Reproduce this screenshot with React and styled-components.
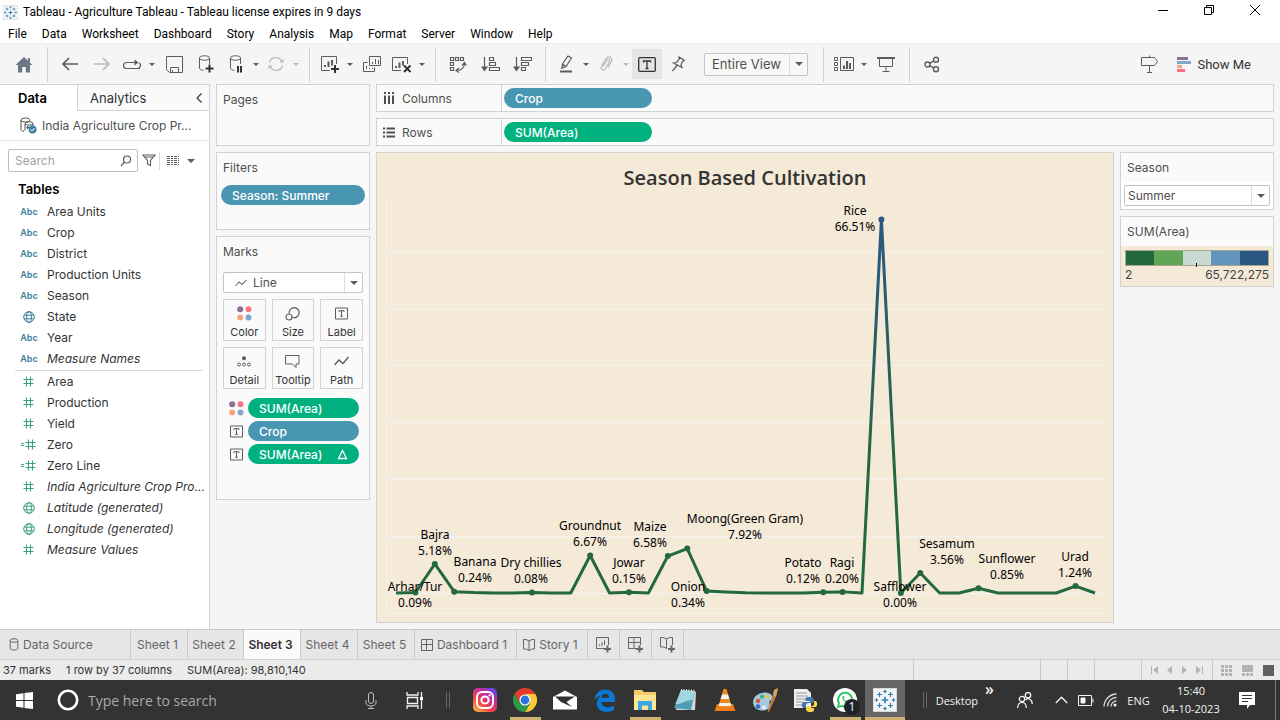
import React from "react";
import styled, { createGlobalStyle, css } from "styled-components";

const ui = `Inter, "Noto Sans", sans-serif`;
const system = `"Open Sans", "Noto Sans", sans-serif`;
const windowFont = `Roboto, "Open Sans", sans-serif`;
const chartFont = `"Noto Sans", "Open Sans", sans-serif`;

const c = {
  line: "#d2d2d2",
  canvas: "#f5f5f5",
  card: "#fafafa",
  text: "#333333",
  soft: "#4f4f4f",
  icon: "#5c5c5c",
  dim: "#b8b8b8",
  blue: "#4996b2",
  green: "#00b180",
  sand: "#f5e9d8",
};

const GlobalStyle = createGlobalStyle`
  *, *::before, *::after { box-sizing: border-box; }
  body { margin: 0; background: ${c.canvas}; font-family: ${ui}; font-size: 12px; color: ${c.text}; }
  button, input, select { font: inherit; color: inherit; margin: 0; }
  button { background: none; border: 0; padding: 0; }
  h1, h2, h3, ul { margin: 0; padding: 0; font-size: inherit; font-weight: inherit; }
  ul { list-style: none; }
  svg { display: block; flex: none; }
`;

const Page = styled.div`
  display: flex;
  flex-direction: column;
  min-height: 100vh;
`;

/* ---------- window chrome ---------- */

const TitleBar = styled.header`
  display: flex;
  align-items: center;
  height: 24px;
  padding-left: 3px;
  gap: 5px;
  background: #fff;
  color: #000;
  font-family: ${windowFont};
`;

const WindowButtons = styled.div`
  display: flex;
  align-self: flex-start;
  margin: 0 2px 0 auto;
`;

const WindowButton = styled.button`
  display: grid;
  place-items: center;
  width: 46px;
  height: 20px;
`;

const MenuBar = styled.nav`
  display: flex;
  align-items: center;
  height: 19px;
  padding-left: 8px;
  gap: 15px;
  background: #fff;
  color: #000;
  font-family: ${windowFont};
`;

/* ---------- toolbar ---------- */

const Toolbar = styled.div`
  display: flex;
  align-items: center;
  height: 41px;
  padding: 0 8px;
  border-top: 1px solid #ececec;
  color: ${c.icon};
`;

const ToolButton = styled.button`
  display: grid;
  place-items: center;
  width: ${(p) => p.$w || 32}px;
  height: 30px;
  color: ${(p) => (p.$active ? "#333" : p.$dim ? c.dim : c.icon)};
  background: ${(p) => (p.$active ? "#e5e5e5" : "none")};
`;

const Separator = styled.span`
  width: 1px;
  height: 35px;
  margin: 0 6px 0 7px;
  background: ${c.line};
`;

const ShowMe = styled.button`
  display: flex;
  align-items: center;
  gap: 6px;
  margin: 0 21px 0 12px;
  font-family: Roboto, ${ui};
  font-size: 13px;
  color: ${c.text};
`;

const Spacer = styled.span`
  flex: 1;
`;

/* ---------- drop-down ---------- */

const SelectBox = styled.span`
  display: grid;
  grid-template-columns: 1fr 18px;
  height: ${(p) => p.$h || 21}px;
  width: ${(p) => (p.$w ? `${p.$w}px` : "auto")};
  margin: ${(p) => p.$margin || 0};
  border: 1px solid #c4c4c4;
  border-radius: 2px;
  background: ${(p) => p.$bg || "#fff"};
`;

const SelectInput = styled.select`
  grid-area: 1 / 1 / 2 / 3;
  min-width: 0;
  width: 100%;
  appearance: none;
  border: 0;
  outline: 0;
  background: none;
  padding: 0 18px 0 ${(p) => p.$indent || 3}px;
  font-size: ${(p) => p.$size || 12}px;
  color: ${c.soft};
`;

const SelectArrow = styled.span`
  grid-area: 1 / 2;
  display: grid;
  place-items: center;
  border-left: 1px solid #dcdcdc;
  pointer-events: none;
  color: ${c.icon};
`;

const SelectLead = styled.span`
  grid-area: 1 / 1;
  display: flex;
  align-items: center;
  padding-left: 11px;
  pointer-events: none;
  color: #777;
`;

/* ---------- workspace ---------- */

const Workspace = styled.div`
  display: flex;
  flex: 1;
  align-items: stretch;
`;

const DataPane = styled.aside`
  width: 210px;
  flex: none;
  background: #fff;
  border-top: 1px solid ${c.line};
  border-right: 1px solid ${c.line};
`;

const PaneTabs = styled.div`
  display: flex;
  height: 26px;
`;

const PaneTab = styled.button`
  width: 77px;
  padding-right: 12px;
  font-size: 13px;
  font-weight: 600;
  color: #000;
`;

const OtherTabs = styled.div`
  display: flex;
  flex: 1;
  align-items: center;
  justify-content: space-between;
  padding: 0 7px 0 12px;
  background: ${c.card};
  border-left: 1px solid ${c.line};
  border-bottom: 1px solid ${c.line};
  font-size: 13px;
`;

const Source = styled.div`
  display: flex;
  align-items: center;
  gap: 5px;
  height: 30px;
  padding-left: 20px;
  border-bottom: 1px solid #e2e2e2;
  white-space: nowrap;
  color: ${c.soft};
`;

const SearchRow = styled.div`
  display: flex;
  align-items: center;
  padding: 8px 12px 6px 8px;
  color: ${c.icon};
`;

const SearchBox = styled.label`
  display: flex;
  align-items: center;
  width: 130px;
  height: 23px;
  padding: 0 5px 0 6px;
  border: 1px solid #bdbdbd;
  border-radius: 2px;
`;

const SearchInput = styled.input`
  flex: 1;
  min-width: 0;
  border: 0;
  outline: 0;
  padding: 0;
  background: none;
  &::placeholder { color: #a2a2a2; opacity: 1; }
`;

const IconButton = styled.button`
  display: grid;
  place-items: center;
  width: ${(p) => p.$w || 22}px;
  height: 20px;
  color: ${c.icon};
`;

const ThinRule = styled.span`
  width: 1px;
  height: 18px;
  background: #d8d8d8;
`;

const TablesHeading = styled.h2`
  padding-left: 18px;
  line-height: 22px;
  font-size: 13px;
  font-weight: 600;
  color: #000;
`;

const FieldList = styled.ul`
  margin: 0 6px 0 15px;
  padding: 1px 0;
  & + & {
    padding: 0;
    border-top: 1px solid #d8d8d8;
  }
`;

const Field = styled.li`
  display: grid;
  grid-template-columns: 28px 1fr;
  align-items: center;
  height: 21px;
  column-gap: 4px;
  white-space: nowrap;
  font-style: ${(p) => (p.$italic ? "italic" : "normal")};
`;

const FieldIcon = styled.span`
  display: grid;
  place-items: center;
  font-size: 9px;
  font-style: normal;
  font-weight: 600;
  color: ${(p) => (p.$measure ? "#3ba37c" : "#3c7f9b")};
`;

const Shelves = styled.div`
  display: flex;
  flex-direction: column;
  gap: 6px;
  width: 154px;
  flex: none;
  margin-left: 6px;
`;

const Card = styled.section`
  min-height: ${(p) => p.$min || 0}px;
  border: 1px solid ${c.line};
  background: ${c.card};
`;

const CardTitle = styled.h2`
  padding: 0 6px;
  line-height: 29px;
  color: ${c.soft};
`;

const Pill = styled.button`
  display: flex;
  align-items: center;
  justify-content: space-between;
  width: ${(p) => (p.$w ? `${p.$w}px` : "auto")};
  height: 20px;
  flex: ${(p) => (p.$w ? "none" : 1)};
  padding: 0 11px;
  border-radius: 10px;
  background: ${(p) => (p.$measure ? c.green : c.blue)};
  color: #fff;
  font-weight: 500;
`;

const FilterRow = styled.div`
  display: flex;
  padding: 3px 4px;
`;

const MarksBody = styled.div`
  display: flex;
  flex-direction: column;
  gap: 6px;
  padding: 6px;
`;

const MarkGrid = styled.div`
  display: grid;
  grid-template-columns: repeat(3, 1fr);
  gap: 6px;
`;

const MarkButton = styled.button`
  display: flex;
  flex-direction: column;
  align-items: center;
  justify-content: space-between;
  height: 42px;
  padding: 4px 0 1px;
  border: 1px solid ${c.line};
  background: ${c.card};
  font-size: 11px;
  line-height: 14px;
  color: ${c.text};
`;

const MarkIcon = styled.span`
  display: grid;
  place-items: center;
  height: 18px;
  color: ${c.icon};
`;

const MarkPills = styled.div`
  display: flex;
  flex-direction: column;
  gap: 3px;
  padding: 3px 4px;
`;

const MarkPillRow = styled.div`
  display: flex;
  align-items: center;
  color: ${c.icon};
`;

const PillIcon = styled.span`
  display: grid;
  place-items: center;
  width: 21px;
  padding-right: 2px;
`;

const View = styled.main`
  display: flex;
  flex-direction: column;
  flex: 1;
  min-width: 0;
  gap: 6px;
  padding: 0 6px 6px;
`;

const Shelf = styled.div`
  display: flex;
  align-items: stretch;
  height: 28px;
  border: 1px solid ${c.line};
  background: ${c.card};
`;

const ShelfName = styled.h2`
  display: flex;
  align-items: center;
  gap: 7px;
  width: 125px;
  padding-left: 6px;
  border-right: 1px solid ${c.line};
  color: ${c.soft};
`;

const ShelfDrop = styled.div`
  display: flex;
  align-items: center;
  padding-left: 2px;
`;

const ViewRow = styled.div`
  display: flex;
  align-items: flex-start;
  gap: 6px;
`;

const ChartCard = styled.section`
  flex: 1;
  min-width: 0;
  border: 1px solid ${c.line};
  background: ${c.sand};
`;

const ChartTitle = styled.h1`
  height: 46px;
  padding-top: 2px;
  line-height: 46px;
  text-align: center;
  font-family: ${system};
  font-size: 20px;
  font-weight: 600;
  color: #333;
`;

const ChartSvg = styled.svg`
  width: 100%;
  height: auto;
  font-family: ${chartFont};
  font-size: 12px;
  text-anchor: middle;
  fill: #000;
`;

const Legends = styled.div`
  display: flex;
  flex-direction: column;
  gap: 6px;
  width: 154px;
  flex: none;
`;

const FilterControl = styled.div`
  padding: 3px;
  background: #fff;
`;

const Legend = styled.div`
  padding: 4px 4px 2px;
  background: ${c.sand};
`;

const Ramp = styled.div`
  display: grid;
  grid-template-columns: repeat(5, 1fr);
  height: 16px;
  border: 1px solid #a9a58f;
`;

const Swatch = styled.span`
  display: flex;
  justify-content: center;
  align-items: flex-end;
  background: ${(p) => p.$color};
`;

const Tick = styled.i`
  width: 1px;
  height: 4px;
  margin-bottom: -2px;
  background: #000;
`;

const RampLabels = styled.div`
  display: flex;
  justify-content: space-between;
  line-height: 18px;
  font-size: 12px;
  color: #444;
`;

/* ---------- sheet tabs and status bar ---------- */

const SheetTabs = styled.div`
  display: flex;
  height: 30px;
  border-top: 1px solid #c9c9c9;
  background: #e6e6e6;
`;

const SheetTab = styled.button`
  display: flex;
  align-items: center;
  gap: 4px;
  justify-content: ${(p) => (p.$start ? "flex-start" : "center")};
  width: ${(p) => p.$w}px;
  padding: ${(p) => (p.$start ? "0 0 0 9px" : p.$w > 32 ? "0 3px 0 0" : "0")};
  border-right: 1px solid #c9c9c9;
  color: #666;
  ${(p) =>
    p.$active &&
    css`
      background: ${c.card};
      color: ${c.text};
      font-weight: 600;
    `}
`;

const StatusBar = styled.footer`
  display: flex;
  align-items: center;
  gap: 15px;
  height: 21px;
  padding-left: 3px;
  border-top: 1px solid #d2d2d2;
  background: #ebebeb;
  font-size: 11px;
`;

const StatusCells = styled.div`
  display: flex;
  align-self: stretch;
  margin-left: auto;
`;

const StatusCell = styled.span`
  display: flex;
  align-items: center;
  justify-content: ${(p) => (p.$views ? "space-between" : "space-evenly")};
  padding: ${(p) => (p.$views ? "0 6px 0 8px" : 0)};
  width: ${(p) => p.$w}px;
  border-left: 1px solid #c9c9c9;
  color: #b3b3b3;
`;

/* ---------- taskbar ---------- */

const Taskbar = styled.div`
  display: flex;
  align-items: stretch;
  height: 40px;
  background: #333;
  color: #f2f2f2;
  font-family: ${system};
  font-size: 11px;
`;

const TaskButton = styled.button`
  display: grid;
  place-items: center;
  width: ${(p) => p.$w}px;
`;

const TaskSearch = styled.label`
  display: flex;
  align-items: center;
  gap: 9px;
  width: 336px;
  padding: 0 7px 0 9px;
`;

const TaskInput = styled.input`
  flex: 1;
  min-width: 0;
  border: 0;
  outline: 0;
  padding: 0;
  background: none;
  font-size: 14px;
  &::placeholder { color: #a9a9a9; opacity: 1; }
`;

const Grip = styled.span`
  align-self: center;
  width: 4px;
  height: 16px;
  margin: ${(p) => p.$margin};
  border: solid #666;
  border-width: 0 1px;
`;

const TaskApp = styled.button`
  display: grid;
  grid-template-rows: 1fr 3px;
  place-items: center;
  width: 40px;
  border-top: 3px solid transparent;
  background: ${(p) => (p.$active ? "#666" : "none")};
  &::after {
    content: "";
    width: ${(p) => (p.$active ? 40 : 31)}px;
    height: 3px;
    background: ${(p) => (p.$open ? "#cdb271" : "transparent")};
  }
`;

const BadgeHost = styled.span`
  position: relative;
`;

const Badge = styled.span`
  position: absolute;
  right: -3px;
  bottom: -3px;
  width: 16px;
  height: 16px;
  border-radius: 50%;
  background: #20232a;
  color: #fff;
  font-size: 12px;
  line-height: 16px;
  text-align: center;
`;

const Tray = styled.div`
  display: flex;
  align-items: center;
  margin-left: auto;
  padding-right: 4px;
`;

const DesktopButton = styled.button`
  display: flex;
  align-items: center;
  gap: 7px;
  height: 40px;
  margin-right: 9px;
`;

const Chevrons = styled.span`
  align-self: flex-start;
  font-size: 16px;
  font-weight: 600;
  line-height: 18px;
`;

const Clock = styled.button`
  width: 74px;
  line-height: 18px;
`;

const ShowDesktop = styled.span`
  width: 1px;
  height: 40px;
  margin-left: 9px;
  background: #7a7a7a;
`;

/* ---------- icons ---------- */

const Icon = ({ w = 16, h = 16, sw = 1, children, ...rest }) => (
  <svg width={w} height={h} viewBox={`0 0 ${w} ${h}`} fill="none" stroke="currentColor" strokeWidth={sw} aria-hidden="true" {...rest}>
    {children}
  </svg>
);

const Caret = ({ w = 8 }) => (
  <svg width={w} height={w / 2} viewBox="0 0 8 4" aria-hidden="true">
    <path d="M0 0h8l-4 4z" fill="currentColor" />
  </svg>
);

const plusAt = (x, y, r) => `M${x - r} ${y}h${2 * r}M${x} ${y - r}v${2 * r}`;

const TableauMark = ({ size = 16, bg = "#fff" }) => (
  <svg width={size} height={size} viewBox="0 0 24 24" aria-hidden="true">
    <path d="M0 0h24v24H0z" fill={bg} stroke="#bbb" />
    <g stroke="#2f7fb5" strokeWidth="1.2">
      <path d={plusAt(12, 12, 3.2)} strokeWidth="1.6" />
      <path d={plusAt(12, 3.500, 1.8) + plusAt(12, 20.500, 1.8) + plusAt(3.500, 12, 1.8) + plusAt(20.500, 12, 1.8)} />
      <path d={plusAt(6.500, 6.500, 2.5) + plusAt(17.500, 6.500, 2.5) + plusAt(6.500, 17.500, 2.5) + plusAt(17.500, 17.500, 2.5)} />
    </g>
  </svg>
);

const I = {
  home: (
    <Icon w={18} h={17}>
      <path d="M9 1l8.500 8H15v7.500h-4.200V11H7.200v5.500H3V9H.5z" fill="#6b7785" stroke="none" />
      <path d="M13 2h2v4h-2z" fill="#6b7785" stroke="none" />
    </Icon>
  ),
  back: <Icon w={18} h={14} sw={1.7}><path d="M17 7H2M8 1L2 7l6 6" /></Icon>,
  forward: <Icon w={18} h={14} sw={1.7}><path d="M1 7h15M10 1l6 6-6 6" /></Icon>,
  loop: (
    <Icon w={20} h={11} sw={1.2}>
      <path d="M5.500 3.500H4.500a3 3 0 0 0 0 6h11a3 3 0 0 0 1.500-5.600M5 3.500h9" />
      <path d="M12.500 .5l4 3-4 3z" fill="currentColor" stroke="none" />
    </Icon>
  ),
  save: <Icon w={17} h={17}><path d="M.5 .5h16v16H3.500l-3-3zM4.500 16v-4.500h8V16M6.500 14v2" /></Icon>,
  dbAdd: (
    <Icon w={16} h={18}>
      <ellipse cx="6.500" cy="3" rx="5" ry="2.200" />
      <path d="M1.500 3v10c0 1.200 1 2 4 2.300M11.500 3v6" />
      <path d="M7.500 13.500h8M11.500 9.500v8" stroke="#333" strokeWidth="2" />
    </Icon>
  ),
  dbPause: (
    <Icon w={14} h={18}>
      <ellipse cx="6.500" cy="3" rx="5" ry="2.200" />
      <path d="M1.500 3v10c0 1.200 1 2 4 2.300M11.500 3v6" />
      <path d="M9 11v6.500M12 11v6.500" stroke="#333" strokeWidth="2" />
    </Icon>
  ),
  refresh: (
    <Icon w={18} h={16} sw={1.2}>
      <path d="M2.500 6.500a6.500 6.500 0 0 1 12-1.500M15.500 9.500a6.500 6.500 0 0 1-12 1.500" />
      <path d="M16.500 3v3.500h-4zM1.500 13V9.500h4z" fill="currentColor" stroke="none" />
    </Icon>
  ),
  newSheet: (
    <Icon w={20} h={18}>
      <path d="M10 15.500H1.500v-14h15V9" />
      <path d="M5 12v-2M8.500 12V6.500M12 10.500V5" strokeWidth="2" />
      <path d="M11 14h8M15 10v8" stroke="#333" strokeWidth="2" />
    </Icon>
  ),
  duplicate: (
    <Icon w={18} h={17}>
      <path d="M6.500 .5h11v9h-11zM4.500 6.500h-4v9h11v-4" />
      <path d="M9.500 8V6M12.500 8V3M15.500 8V4M3.500 13v-3M6.500 13v-1M9.500 13v-1" />
    </Icon>
  ),
  clear: (
    <Icon w={20} h={17}>
      <path d="M9 14.500H.5v-13h15V8" />
      <path d="M4 12v-2M7.500 12V6.500M11 9.500V5" strokeWidth="2" />
      <path d="M12 9.500l6.500 6.500M18.500 9.500L12 16" stroke="#333" strokeWidth="2" />
    </Icon>
  ),
  swap: (
    <Icon w={18} h={17} sw={1.2}>
      <path d="M1.500 1.500h3v3h-3zM6.500 1.500h3v3h-3zM11.500 1.500h3v3h-3zM1.500 6.500h3v3h-3zM1.500 11.500h3v3h-3z" />
      <path d="M15.500 7c0 5-3 7.500-8 7.500M13 9.500l2.500-3 2 3M10 12l-3 2.500 3 2" />
    </Icon>
  ),
  sortAsc: (
    <Icon w={19} h={16} sw={1.2}>
      <path d="M3.500 1v13M1 11l2.500 3.500L6 11z" fill="currentColor" />
      <path d="M8.500 1.500h4v3h-4zM8.500 6.500h6v3h-6zM8.500 11.500h10v3h-10z" />
    </Icon>
  ),
  sortDesc: (
    <Icon w={19} h={16} sw={1.2}>
      <path d="M3.500 1v13M1 11l2.500 3.500L6 11z" fill="currentColor" />
      <path d="M8.500 1.500h10v3h-10zM8.500 6.500h7v3h-7zM8.500 11.500h4v3h-4z" />
    </Icon>
  ),
  highlighter: (
    <Icon w={14} h={18} sw={1.2}>
      <path d="M3 13l.5-4L9 1l3.500 2L7 11.500zM3.500 9L7 11.500M2 13.500L3.500 12" />
      <path d="M1 16.500h12" strokeWidth="2" />
    </Icon>
  ),
  clip: (
    <Icon w={13} h={16} sw={1.2}>
      <path d="M3 10.500L7 4c1-1.500 3.500-.5 2.500 1.500L5.500 12.500c-1.500 3-5.500 1-4-2L6 2.500C8-.5 13 1 11.500 5L8 11.500" />
    </Icon>
  ),
  label: (
    <Icon w={18} h={15} sw={1.3}>
      <rect x=".7" y=".7" width="16.600" height="13.600" rx="1" />
      <path d="M5.500 5.500v-1.500h7v1.500M9 4v7.500M7.500 11.500h3" />
    </Icon>
  ),
  pin: (
    <Icon w={14} h={16} sw={1.2}>
      <path d="M8 1l5.500 3.500-2 .7-1.500 3.800 1 2.500-8.500-4.500L5.500 6.500 8 3.500zM6 9.500L1.500 15" />
    </Icon>
  ),
  cards: (
    <Icon w={20} h={15}>
      <path d="M.5 .5h3v3h-3zM.5 5.500h3v3h-3zM.5 10.500h3v3h-3zM6.500 .5h13v13h-13z" />
      <path d="M10 12V8.500M13 12V4M16 12V6" strokeWidth="2" />
    </Icon>
  ),
  present: (
    <Icon w={18} h={16}>
      <path d="M0 2h18" strokeWidth="2" />
      <path d="M2.500 2v8.500h13V2M9 10v5M5.500 15.500h7" />
    </Icon>
  ),
  share: (
    <Icon w={16} h={17} sw={1.4}>
      <circle cx="3.500" cy="8.500" r="2.500" /><circle cx="12" cy="3.700" r="2.500" /><circle cx="12" cy="13.300" r="2.500" />
      <path d="M5.700 7.300l4-2.400M5.700 9.700l4 2.400" />
    </Icon>
  ),
  signpost: <Icon w={19} h={18}><path d="M1.500 2.500h13l3 4-3 4h-13zM9.500 .5v2M9.500 10.500v7M7 17.500h5" strokeLinejoin="round" /></Icon>,
  showMe: (
    <svg width="14" height="15" viewBox="0 0 14 15" aria-hidden="true">
      <path d="M0 0h11v3H0z" fill="#8a6f96" /><path d="M0 4h14v3H0z" fill="#85a5cc" />
      <path d="M0 8h5v3H0z" fill="#f3a57d" /><path d="M0 12h8v3H0z" fill="#fa6f80" />
    </svg>
  ),
  source: (
    <Icon w={17} h={17}>
      <ellipse cx="5.500" cy="3" rx="4.500" ry="2" /><path d="M1 3v9.500c0 1 1 1.500 3 1.800" />
      <path d="M5 6.500c2-2.500 8-2 8 0v3M5 6.500v7M5 7c1 1.500 7 1.500 8 0M6.500 10.500h2.500M7.500 9v3" />
      <circle cx="12.500" cy="12.500" r="4" fill="#3f80a0" stroke="none" />
      <path d="M10.500 12.500l1.500 1.500 2.500-3" stroke="#fff" />
    </Icon>
  ),
  search: <Icon w={12} h={12} sw={1.2}><circle cx="7" cy="4.500" r="3.500" /><path d="M4.500 7L1 11" /></Icon>,
  funnel: <Icon w={14} h={13} sw={1.1}><path d="M1 1h12L8.500 6.500v5L5.500 10V6.500zM2.500 3h9" /></Icon>,
  list: <Icon w={12} h={10}><path d="M0 .5h12M0 2.500h12M0 4.500h12M0 6.500h12M0 8.500h12" strokeDasharray="3 1 2 1" /></Icon>,
  globe: (
    <Icon w={12} h={12} sw={1}>
      <circle cx="6" cy="6" r="5.300" /><ellipse cx="6" cy="6" rx="2.400" ry="5.300" /><path d="M1.200 4.200h9.600M1.200 7.800h9.600" />
    </Icon>
  ),
  hash: <Icon w={12} h={11} sw={1.1}><path d="M3.500 .5v10M7.500 .5v10M.5 3.500h10M.5 7.500h10" /></Icon>,
  calc: <Icon w={18} h={11} sw={1.1}><path d="M8.500 .5v10M12.500 .5v10M5.500 3.500h10M5.500 7.500h10M1 4.500h3M1 6.500h3" /></Icon>,
  cols: (
    <Icon w={12} h={12} sw={2}><path d="M2 0v2M6 0v2M10 0v2M2 3.500V12M6 3.500V12M10 3.500V12" /></Icon>
  ),
  rows: (
    <Icon w={12} h={11} sw={2}><path d="M0 1.500h2M0 5.500h2M0 9.500h2M3.500 1.500H12M3.500 5.500H12M3.500 9.500H12" /></Icon>
  ),
  dots: (
    <svg width="15" height="15" viewBox="0 0 15 15" aria-hidden="true">
      <circle cx="3.200" cy="3.200" r="3" fill="#8a6f96" /><circle cx="11.500" cy="3.200" r="3" fill="#fa7585" />
      <circle cx="3.200" cy="11.500" r="3" fill="#f3a57d" /><circle cx="11.500" cy="11.500" r="3" fill="#85a5cc" />
    </svg>
  ),
  size: <Icon w={15} h={15} sw={1.2}><path d="M4.200 7.500a5 5 0 1 1 3 3.800" /><circle cx="4" cy="11" r="3" /></Icon>,
  text: (
    <Icon w={13} h={13}><path d="M.5 1h12v11H.5zM4 5V3.700h5V5M6.500 3.700v5.600M5.200 9.300h2.600" /></Icon>
  ),
  detail: (
    <Icon w={14} h={11}>
      <circle cx="7" cy="2.200" r="2" fill="currentColor" stroke="none" />
      <circle cx="2" cy="8.500" r="1.500" /><circle cx="7" cy="8.500" r="1.500" /><circle cx="12" cy="8.500" r="1.500" />
    </Icon>
  ),
  tooltip: <Icon w={15} h={13}><path d="M.5 .5h13.500v8.500h-3v3.500L7.500 9h-7z" /></Icon>,
  path: <Icon w={15} h={10} sw={1.4}><path d="M.5 9l4.500-5 4 3.500L14.500 1" /></Icon>,
  line: <Icon w={12} h={8} sw={1.1}><path d="M.5 7L4 3l3 2.500L11.500 1" /></Icon>,
  cylinder: <Icon w={10} h={13}><ellipse cx="5" cy="2.500" rx="3.800" ry="1.800" /><path d="M1.200 2.500v8c0 2 7.600 2 7.600 0v-8" /></Icon>,
  dashboard: <Icon w={12} h={12}><path d="M.5 .5h11v11H.5zM.5 5.500h11M5.500 .5v11" /></Icon>,
  story: <Icon w={12} h={12}><path d="M.5 .5h2.500l3 1.500 3-1.500h2.500v9.500H9l-3 1.500L3 10H.5zM6 2v9.500" /></Icon>,
  addSheet: (
    <Icon w={16} h={16}><path d="M8 11.500H.5v-11h12V8M3.500 9V7.500M6 9V5M8.500 8V3.500" /><path d="M8 12h7M11.500 8.500v7" strokeWidth="2" /></Icon>
  ),
  addDashboard: (
    <Icon w={16} h={16}><path d="M8 11.500H.5v-11h12V8M.5 5.500h12M6 .5v11" /><path d="M8 12h7M11.500 8.500v7" strokeWidth="2" /></Icon>
  ),
  addStory: (
    <Icon w={16} h={16}><path d="M7 11.500L3.500 10H.5V.5h3L6.500 2l3-1.500h3V8M6.500 2v9" /><path d="M8 12h7M11.500 8.500v7" strokeWidth="2" /></Icon>
  ),
};

const TaskIcons = {
  instagram: (
    <svg width="24" height="24" viewBox="0 0 24 24" fill="none">
      <defs>
        <linearGradient id="ig" x1="0" y1="1" x2=".8" y2="0">
          <stop offset="0" stopColor="#fdc64b" /><stop offset=".4" stopColor="#f6433f" />
          <stop offset=".7" stopColor="#c52f9c" /><stop offset="1" stopColor="#6a46e0" />
        </linearGradient>
      </defs>
      <rect width="24" height="24" rx="5" fill="url(#ig)" />
      <rect x="4" y="4" width="16" height="16" rx="5" stroke="#fff" strokeWidth="2" />
      <circle cx="12" cy="12" r="3.600" stroke="#fff" strokeWidth="2" /><circle cx="16.600" cy="7.400" r="1.100" fill="#fff" />
    </svg>
  ),
  chrome: (
    <svg width="24" height="24" viewBox="0 0 24 24">
      <path d="M12 6h10.400A12 12 0 0 1 12 24l5.200-9z" fill="#fcc934" />
      <path d="M6.800 15L1.600 6a12 12 0 0 1 20.800 0H12z" fill="#e33b2e" />
      <path d="M6.800 15L1.600 6A12 12 0 0 0 12 24l5.200-9z" fill="#2b9a4b" />
      <circle cx="12" cy="12" r="5.600" fill="#fff" /><circle cx="12" cy="12" r="4.400" fill="#2a73e0" />
    </svg>
  ),
  mail: (
    <svg width="24" height="20" viewBox="0 0 24 20">
      <path d="M0 7l12-6.500L24 7v12.500H0z" fill="#fff" /><path d="M2 6.500h20L13.500 12l5.500 5L8 12z" fill="#333" />
    </svg>
  ),
  edge: (
    <svg width="22" height="23" viewBox="0 0 22 23">
      <path d="M.5 11C1 4.500 5.500.5 11.300.5 17.500.5 21 5 21 10.500V13H7.300c.2 3.500 3 5.300 6.400 5.300 2.300 0 4.500-.7 6.300-1.800v4.600c-2 1.200-4.600 1.900-7.500 1.900C6.500 23 2.800 19.300 2.800 14.500c0-3.700 2-6.700 5.200-8.300C4.800 6.800 2.200 8.600.5 11zm6.900-2.200h7.800c0-2.200-1.200-4-3.700-4-2.300 0-3.800 1.800-4.100 4z" fill="#0a78d7" />
    </svg>
  ),
  explorer: (
    <svg width="24" height="22" viewBox="0 0 24 22">
      <path d="M1 1h8l2 2h12v18H1z" fill="#f3cf6b" /><path d="M1 6h22v15H1z" fill="#fde593" />
      <path d="M5 12h14v9h-4v-4.500H9V21H5z" fill="#36a9e6" />
    </svg>
  ),
  notes: (
    <svg width="24" height="24" viewBox="0 0 24 24">
      <path d="M8 3l15 1-1 18-19 0z" fill="#d5dadd" /><path d="M8 2l14 1-4 19-17-2z" fill="#4d9fb4" />
      <path d="M8 2l14 1-2.500 9C12 12 8 17 2.500 16z" fill="#9fd6df" />
      <path d="M8.500 1v2.500M11 1v2.500M13.500 1.200v2.500M16 1.500v2.500M18.500 1.500v2.500M21 1.800v2.500" stroke="#ddd" />
    </svg>
  ),
  vlc: (
    <svg width="22" height="24" viewBox="0 0 22 24">
      <path d="M3 16h16l2.500 7H.5z" fill="#ef7d1a" /><path d="M9.500 1h3l5 17c-2 2-11 2-13 0z" fill="#f28a1f" />
      <path d="M8 6.500h6l1.300 4.500H6.700zM5.500 15h11l.8 3h-12.500z" fill="#f4f4f4" />
    </svg>
  ),
  paint: (
    <svg width="26" height="25" viewBox="0 0 26 25">
      <path d="M2 18C-2 9 8 3 16 5c5 1.500 6 5 3 7s-1 4-1 6c0 4-12 8-16 0z" fill="#a5cbe3" />
      <circle cx="6" cy="13" r="2.200" fill="#e04f3f" /><circle cx="10" cy="8.800" r="2" fill="#4caf50" /><circle cx="15.500" cy="8.500" r="2" fill="#f3c343" />
      <circle cx="6" cy="18.500" r="2.200" fill="#3a66c4" /><circle cx="12" cy="19.500" r="2" fill="#eee" />
      <path d="M21 7l3 1.500L17 24l-1.500-1z" fill="#c47a3a" /><path d="M21 7l1-5 4-2-1 5-1 4z" fill="#dba56a" />
    </svg>
  ),
  python: (
    <svg width="24" height="24" viewBox="0 0 24 24">
      <path d="M1 1h13l4 4v15H1z" fill="#eee" /><path d="M3 5h11M3 8h12M3 11h12M3 14h8M3 17h7" stroke="#999" />
      <path d="M16 9c-4 0-3.500 2-3.500 4H17v1h-6c-3 0-3 6 0 6h2v-3c0-1 1-2 2-2h4c1 0 2-1 2-2 0-2 0-4-5-4z" fill="#3f77ab" />
      <path d="M17.500 24c4 0 3.500-2 3.500-4h-4.500v-1H22c3 0 3-6 0-6h-1v3c0 1-1 2-2 2h-4c-1 0-2 1-2 2 0 2 0 4 4.500 4z" fill="#fbd247" />
    </svg>
  ),
  whatsapp: (
    <svg width="24" height="24" viewBox="0 0 24 24">
      <circle cx="12" cy="12" r="12" fill="#fff" />
      <path d="M5 19l1-3.800a7 7 0 1 1 2.800 2.700z" fill="none" stroke="#28c45a" strokeWidth="1.800" />
      <path d="M9.500 8.500c-1.500 2 3 7 5.500 6l1-1.500-2-1-1 1c-1-.3-2-1.500-2.300-2.200l.8-1-.8-1.800z" fill="#28c45a" />
    </svg>
  ),
};

/* ---------- data ---------- */

const menus = ["File", "Data", "Worksheet", "Dashboard", "Story", "Analysis", "Map", "Format", "Server", "Window", "Help"];

const dimensions = [
  { name: "Area Units" }, { name: "Crop" }, { name: "District" }, { name: "Production Units" }, { name: "Season" },
  { name: "State", icon: "globe" }, { name: "Year" }, { name: "Measure Names", italic: true },
];

const measures = [
  { name: "Area", icon: "hash" }, { name: "Production", icon: "hash" }, { name: "Yield", icon: "hash" },
  { name: "Zero", icon: "calc" }, { name: "Zero Line", icon: "calc" },
  { name: "India Agriculture Crop Pro...", icon: "hash", italic: true },
  { name: "Latitude (generated)", icon: "globe", italic: true },
  { name: "Longitude (generated)", icon: "globe", italic: true },
  { name: "Measure Values", icon: "hash", italic: true },
];

const markCount = 37;

/* at: index of the mark; lx, ly: where the label's first line is centred */
const crops = [
  { at: 1, name: "Arhar/Tur", pct: 0.09, lx: 38, ly: 392 },
  { at: 2, name: "Bajra", pct: 5.18, lx: 58, ly: 340 },
  { at: 3, name: "Banana", pct: 0.24, lx: 98, ly: 367 },
  { at: 7, name: "Dry chillies", pct: 0.08, lx: 154, ly: 368 },
  { at: 10, name: "Groundnut", pct: 6.67, lx: 213, ly: 331 },
  { at: 12, name: "Jowar", pct: 0.15, lx: 252, ly: 368 },
  { at: 14, name: "Maize", pct: 6.58, lx: 273, ly: 332 },
  { at: 15, name: "Moong(Green Gram)", pct: 7.92, lx: 368, ly: 324 },
  { at: 16, name: "Onion", pct: 0.34, lx: 311, ly: 392 },
  { at: 22, name: "Potato", pct: 0.12, lx: 426, ly: 368 },
  { at: 23, name: "Ragi", pct: 0.2, lx: 465, ly: 368 },
  { at: 25, name: "Rice", pct: 66.51, lx: 478, ly: 16 },
  { at: 26, name: "Safflower", pct: 0, lx: 523, ly: 392 },
  { at: 27, name: "Sesamum", pct: 3.56, lx: 570, ly: 349 },
  { at: 30, name: "Sunflower", pct: 0.85, lx: 630, ly: 364 },
  { at: 35, name: "Urad", pct: 1.24, lx: 698, ly: 362 },
];

const unlabelled = { 4: 0.08, 17: 0.18, 18: 0.05 };

const baseY = 394;
const markX = (i) => 19 + (i * 699) / (markCount - 1);
const markY = (pct) => baseY - pct * 5.615;

const Chart = () => {
  const values = Array.from({ length: markCount }, (_, i) => {
    const crop = crops.find((d) => d.at === i);
    return crop ? crop.pct : unlabelled[i] || 0;
  });
  const points = values.map((v, i) => `${markX(i)},${markY(v)}`).join(" ");
  return (
    <ChartSvg viewBox="0 0 736 423" role="img" aria-label="Share of cultivated area by crop">
      <defs>
        <linearGradient id="area" gradientUnits="userSpaceOnUse" x1="0" y1={baseY} x2="0" y2="20">
          <stop offset="0" stopColor="#24693d" /><stop offset=".3" stopColor="#24693d" />
          <stop offset="1" stopColor="#2a5783" />
        </linearGradient>
      </defs>
      <g stroke="#f2f2f2" strokeWidth="1">
        {[53, 110, 166, 223, 280, 337, 394].map((y) => (
          <path key={y} d={`M9 ${y + 0.5}H727`} />
        ))}
        <path d="M9.500 1V414.500H727" fill="none" />
      </g>
      <polyline points={points} fill="none" stroke="url(#area)" strokeWidth="3" strokeLinejoin="round" />
      {crops.map((d) => (
        <g key={d.name}>
          <circle cx={markX(d.at)} cy={markY(d.pct)} r="3" fill={d.pct > 50 ? "#2a5783" : "#24693d"} />
          <text x={d.lx} y={d.ly}>{d.name}</text>
          <text x={d.lx} y={d.ly + 16}>{d.pct.toFixed(2)}%</text>
        </g>
      ))}
    </ChartSvg>
  );
};

const Fields = ({ items, measure }) => (
  <FieldList>
    {items.map((f) => (
      <Field key={f.name} $italic={f.italic}>
        <FieldIcon $measure={measure}>{f.icon ? I[f.icon] : "Abc"}</FieldIcon>
        <span>{f.name}</span>
      </Field>
    ))}
  </FieldList>
);

const Select = ({ label, value, lead, size, indent, ...box }) => (
  <SelectBox {...box}>
    {lead && <SelectLead>{lead}</SelectLead>}
    <SelectInput aria-label={label} defaultValue={value} $size={size} $indent={indent}>
      <option>{value}</option>
    </SelectInput>
    <SelectArrow><Caret /></SelectArrow>
  </SelectBox>
);

const Tool = ({ name, icon, caret, w, dim, active }) => (
  <>
    <ToolButton aria-label={name} $w={w || (caret ? 28 : 32)} $dim={dim} $active={active}>{icon}</ToolButton>
    {caret && <ToolButton aria-label={`${name} options`} $w={12} $dim={dim}><Caret w={6} /></ToolButton>}
  </>
);

export default function App() {
  return (
    <Page>
      <GlobalStyle />
      <TitleBar>
        <TableauMark size={15} bg="#f6f6f6" />
        <span>Tableau - Agriculture Tableau - Tableau license expires in 9 days</span>
        <WindowButtons>
          <WindowButton aria-label="Minimize"><Icon w={10} h={10}><path d="M0 5.500h10" stroke="#000" /></Icon></WindowButton>
          <WindowButton aria-label="Restore"><Icon w={10} h={10}><path d="M.5 2.500h7v7h-7zM2.500 2V.5h7v7H8" stroke="#000" /></Icon></WindowButton>
          <WindowButton aria-label="Close"><Icon w={10} h={10}><path d="M0 0l10 10M10 0L0 10" stroke="#000" /></Icon></WindowButton>
        </WindowButtons>
      </TitleBar>
      <MenuBar>
        {menus.map((m) => <button key={m}>{m}</button>)}
      </MenuBar>

      <Toolbar>
        <Tool name="Start page" icon={I.home} />
        <Separator />
        <Tool name="Undo" icon={I.back} />
        <Tool name="Redo" icon={I.forward} dim />
        <Tool name="Replay" icon={I.loop} caret />
        <Tool name="Save" icon={I.save} />
        <Tool name="New data source" icon={I.dbAdd} />
        <Tool name="Pause updates" icon={I.dbPause} caret />
        <Tool name="Run update" icon={I.refresh} caret dim />
        <Separator />
        <Tool name="New worksheet" icon={I.newSheet} caret />
        <Tool name="Duplicate" icon={I.duplicate} />
        <Tool name="Clear sheet" icon={I.clear} caret />
        <Separator />
        <Tool name="Swap rows and columns" icon={I.swap} />
        <Tool name="Sort ascending" icon={I.sortAsc} />
        <Tool name="Sort descending" icon={I.sortDesc} />
        <Separator />
        <Tool name="Highlight" icon={I.highlighter} caret />
        <Tool name="Group" icon={I.clip} caret dim />
        <Tool name="Show mark labels" icon={I.label} w={30} active />
        <Tool name="Fix axes" icon={I.pin} />
        <Select label="Fit" value="Entire View" size={13} indent={7} $w={104} $h={23} $margin="0 8px 0 10px" $bg="#f7f7f7" />
        <Separator />
        <Tool name="Show or hide cards" icon={I.cards} caret />
        <Tool name="Presentation mode" icon={I.present} />
        <Separator />
        <Tool name="Share" icon={I.share} />
        <Spacer />
        <Tool name="Guide" icon={I.signpost} />
        <ShowMe>{I.showMe}Show Me</ShowMe>
      </Toolbar>

      <Workspace>
        <DataPane>
          <PaneTabs>
            <PaneTab>Data</PaneTab>
            <OtherTabs>
              <button>Analytics</button>
              <button aria-label="Collapse pane"><Icon w={6} h={10} sw={1.2}><path d="M5.500 .5L1 5l4.500 4.500" /></Icon></button>
            </OtherTabs>
          </PaneTabs>
          <Source>{I.source}<span>India Agriculture Crop Pr...</span></Source>
          <SearchRow>
            <SearchBox><SearchInput placeholder="Search" aria-label="Search fields" />{I.search}</SearchBox>
            <IconButton aria-label="Filter fields">{I.funnel}</IconButton>
            <ThinRule />
            <IconButton aria-label="View as list" $w={26}>{I.list}</IconButton>
            <IconButton aria-label="Field options" $w={12}><Caret /></IconButton>
          </SearchRow>
          <TablesHeading>Tables</TablesHeading>
          <Fields items={dimensions} />
          <Fields items={measures} measure />
        </DataPane>

        <Shelves>
          <Card $min={62}><CardTitle>Pages</CardTitle></Card>
          <Card $min={78}>
            <CardTitle>Filters</CardTitle>
            <FilterRow><Pill>Season: Summer</Pill></FilterRow>
          </Card>
          <Card $min={264}>
            <CardTitle>Marks</CardTitle>
            <MarksBody>
              <Select label="Mark type" value="Line" lead={I.line} indent={29} />
              <MarkGrid>
                {[["Color", I.dots], ["Size", I.size], ["Label", I.text], ["Detail", I.detail], ["Tooltip", I.tooltip], ["Path", I.path]].map(
                  ([name, icon]) => (
                    <MarkButton key={name}><MarkIcon>{icon}</MarkIcon>{name}</MarkButton>
                  )
                )}
              </MarkGrid>
              <MarkPills>
                <MarkPillRow><PillIcon>{I.dots}</PillIcon><Pill $measure>SUM(Area)</Pill></MarkPillRow>
                <MarkPillRow><PillIcon>{I.text}</PillIcon><Pill>Crop</Pill></MarkPillRow>
                <MarkPillRow>
                  <PillIcon>{I.text}</PillIcon>
                  <Pill $measure>SUM(Area)<Icon w={11} h={11} sw={1.3}><path d="M5.500 1.500L9.500 9.500h-8z" /></Icon></Pill>
                </MarkPillRow>
              </MarkPills>
            </MarksBody>
          </Card>
        </Shelves>

        <View>
          <Shelf>
            <ShelfName>{I.cols}Columns</ShelfName>
            <ShelfDrop><Pill $w={148}>Crop</Pill></ShelfDrop>
          </Shelf>
          <Shelf>
            <ShelfName>{I.rows}Rows</ShelfName>
            <ShelfDrop><Pill $w={148} $measure>SUM(Area)</Pill></ShelfDrop>
          </Shelf>
          <ViewRow>
            <ChartCard>
              <ChartTitle>Season Based Cultivation</ChartTitle>
              <Chart />
            </ChartCard>
            <Legends>
              <Card>
                <CardTitle>Season</CardTitle>
                <FilterControl><Select label="Season" value="Summer" /></FilterControl>
              </Card>
              <Card>
                <CardTitle>SUM(Area)</CardTitle>
                <Legend>
                  <Ramp>
                    <Swatch $color="#24693d" /><Swatch $color="#60a656" />
                    <Swatch $color="#c9dad2"><Tick /></Swatch>
                    <Swatch $color="#6394be" /><Swatch $color="#2a5783" />
                  </Ramp>
                  <RampLabels><span>2</span><span>65,722,275</span></RampLabels>
                </Legend>
              </Card>
            </Legends>
          </ViewRow>
        </View>
      </Workspace>

      <SheetTabs>
        <SheetTab $w={131} $start>{I.cylinder}Data Source</SheetTab>
        {["Sheet 1", "Sheet 2", "Sheet 3", "Sheet 4", "Sheet 5"].map((s) => (
          <SheetTab key={s} $w={s === "Sheet 2" ? 56 : 57} $active={s === "Sheet 3"}>{s}</SheetTab>
        ))}
        <SheetTab $w={102}>{I.dashboard}Dashboard 1</SheetTab>
        <SheetTab $w={71}>{I.story}Story 1</SheetTab>
        <SheetTab $w={32} aria-label="New worksheet">{I.addSheet}</SheetTab>
        <SheetTab $w={32} aria-label="New dashboard">{I.addDashboard}</SheetTab>
        <SheetTab $w={32} aria-label="New story">{I.addStory}</SheetTab>
      </SheetTabs>

      <StatusBar>
        <span>37 marks</span>
        <span>1 row by 37 columns</span>
        <span>SUM(Area): 98,810,140</span>
        <StatusCells>
          <StatusCell $w={127} /><StatusCell $w={27} /><StatusCell $w={27} /><StatusCell $w={47} />
          <StatusCell $w={71}>
            <Icon w={7} h={8}><path d="M.5 0v8" /><path d="M7 0v8L2 4z" fill="currentColor" stroke="none" /></Icon>
            <Icon w={5} h={8}><path d="M5 0v8L0 4z" fill="currentColor" stroke="none" /></Icon>
            <Icon w={5} h={8}><path d="M0 0v8l5-4z" fill="currentColor" stroke="none" /></Icon>
            <Icon w={7} h={8}><path d="M6.500 0v8" /><path d="M0 0v8l5-4z" fill="currentColor" stroke="none" /></Icon>
          </StatusCell>
          <StatusCell $w={68} $views>
            <Icon w={11} h={11} stroke="none" fill="currentColor"><path d="M0 0h3v3H0zM4 0h3v3H4zM8 0h3v3H8zM0 4h3v3H0zM4 4h3v3H4zM8 4h3v3H8zM0 8h3v3H0zM4 8h3v3H4zM8 8h3v3H8z" /></Icon>
            <Icon w={11} h={11} stroke="none" fill="currentColor"><path d="M0 0h11v7H0zM0 8h3v3H0zM4 8h3v3H4zM8 8h3v3H8z" /></Icon>
            <Icon w={11} h={11} stroke="none"><path d="M0 0h11v11H0z" fill="#606060" /></Icon>
          </StatusCell>
        </StatusCells>
      </StatusBar>

      <Taskbar>
        <TaskButton $w={48} aria-label="Start">
          <Icon w={17} h={17} stroke="none" fill="#fff"><path d="M0 2.300L7.500 1.200V8H0zM8.500 1L17 0v8H8.500zM0 9h7.500v6.800L0 14.700zM8.500 9H17v8l-8.500-1z" /></Icon>
        </TaskButton>
        <TaskSearch>
          <Icon w={22} h={22} sw={2.6}><circle cx="11" cy="11" r="9.200" stroke="#fff" /></Icon>
          <TaskInput placeholder="Type here to search" aria-label="Type here to search" />
          <Icon w={12} h={17} stroke="#bdbdbd"><rect x="3.500" y=".5" width="5" height="11" rx="2.500" /><path d="M1 8v3c0 4 10 4 10 0V8M6 14v2.500M3 16.500h6" /></Icon>
        </TaskSearch>
        <TaskButton $w={62} aria-label="Task view">
          <Icon w={18} h={17} stroke="#f2f2f2" sw={1.3}><path d="M1 0v3h11V0M1 17v-3h11v3M1.500 5.500h10v6h-10zM15.500 0v17" /><path d="M14 5h3v3h-3z" fill="#fff" stroke="none" /></Icon>
        </TaskButton>
        <Grip $margin="0 15px 0 0" />
        <TaskApp aria-label="Instagram">{TaskIcons.instagram}</TaskApp>
        <TaskApp aria-label="Chrome" $open>{TaskIcons.chrome}</TaskApp>
        <TaskApp aria-label="Mail">{TaskIcons.mail}</TaskApp>
        <TaskApp aria-label="Edge">{TaskIcons.edge}</TaskApp>
        <TaskApp aria-label="File Explorer" $open>{TaskIcons.explorer}</TaskApp>
        <TaskApp aria-label="Notepad">{TaskIcons.notes}</TaskApp>
        <TaskApp aria-label="VLC">{TaskIcons.vlc}</TaskApp>
        <TaskApp aria-label="Paint">{TaskIcons.paint}</TaskApp>
        <TaskApp aria-label="Python">{TaskIcons.python}</TaskApp>
        <TaskApp aria-label="WhatsApp" $open><BadgeHost>{TaskIcons.whatsapp}<Badge>1</Badge></BadgeHost></TaskApp>
        <TaskApp aria-label="Tableau" $open $active><TableauMark size={24} bg="#f4f6f8" /></TaskApp>
        <Tray>
          <Grip $margin="0 9px 0 0" />
          <DesktopButton>Desktop<Chevrons>»</Chevrons></DesktopButton>
          <TaskButton $w={44} aria-label="People">
            <Icon w={16} h={17} sw={1.3} stroke="#f2f2f2"><circle cx="5" cy="7" r="2.700" /><path d="M.7 16c0-7.500 8.600-7.500 8.600 0" /><circle cx="11" cy="3.300" r="2.700" /><path d="M8.500 8c3-3 6.500-.5 6.800 4" /></Icon>
          </TaskButton>
          <TaskButton $w={28} aria-label="Show hidden icons"><Icon w={13} h={8} sw={1.4} stroke="#f2f2f2"><path d="M.8 7L6.500 1.300 12.200 7" /></Icon></TaskButton>
          <TaskButton $w={22} aria-label="Battery"><Icon w={16} h={11} stroke="#f2f2f2"><path d="M.5 .5h13v10H.5zM15 3.500v4" /><path d="M3 3h4v5H3z" fill="#fff" /></Icon></TaskButton>
          <TaskButton $w={26} aria-label="Network">
            <Icon w={14} h={14} sw={1.3} stroke="#d8d8d8"><path d="M1 13.500A13 13 0 0 1 13.500 1M4.500 13.500a9 9 0 0 1 9-9M8 13.500A5.500 5.500 0 0 1 13.500 8" /><circle cx="12" cy="12" r="1.500" fill="#fff" stroke="none" /></Icon>
          </TaskButton>
          <TaskButton $w={31}>ENG</TaskButton>
          <Clock><div>15:40</div><div>04-10-2023</div></Clock>
          <TaskButton $w={38} aria-label="Notifications">
            <Icon w={16} h={17} stroke="none"><path d="M0 0h16v13h-5l-3 4v-4H0z" fill="#fff" /><path d="M3 3.500h10M3 6.500h10M3 9.500h6" stroke="#333" /></Icon>
          </TaskButton>
          <ShowDesktop />
        </Tray>
      </Taskbar>
    </Page>
  );
}
